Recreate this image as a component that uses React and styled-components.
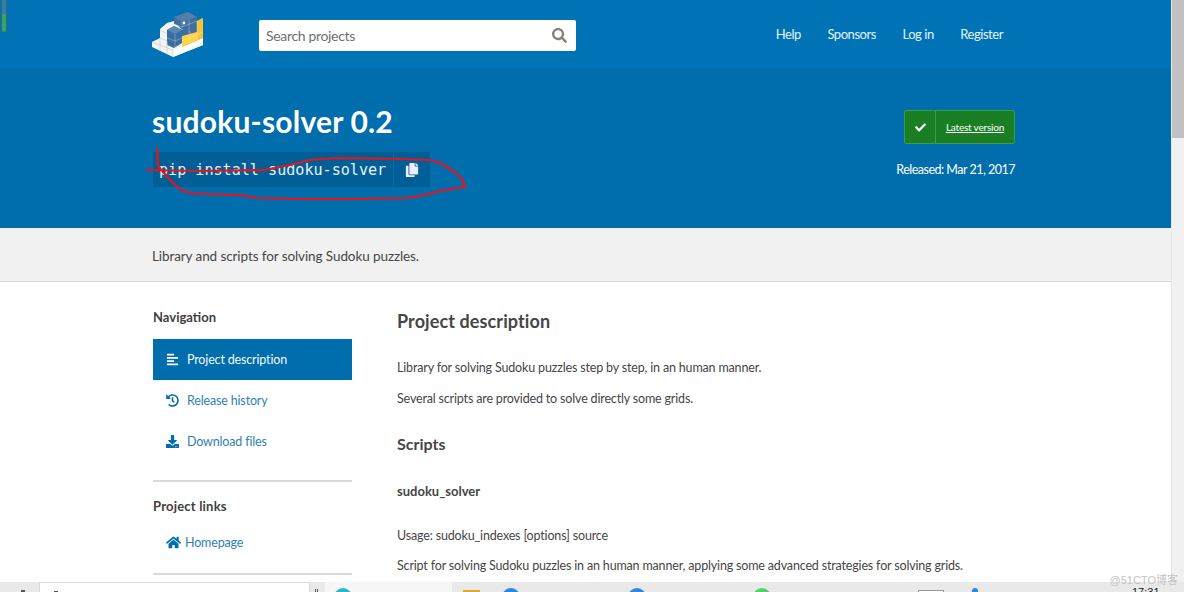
import React from "react";
import styled, { createGlobalStyle } from "styled-components";
import { FaAlignLeft, FaHistory, FaDownload, FaHome, FaCheck, FaSearch, FaCopy } from "react-icons/fa";

const Global = createGlobalStyle`
  html, body { margin: 0; padding: 0; height: 100%; overflow: hidden; background: #fff; }
  #root { height: 592px; }
  * { box-sizing: border-box; }
`;
const Shell = styled.div`
  position: relative; width: 1184px; height: 592px; overflow: hidden;
  display: flex; flex-direction: column;
  font-family: Lato, "Noto Sans", sans-serif; color: #464646;
`;
const Viewport = styled.div`display: flex; height: 582px; overflow: hidden;`;
const Page = styled.div`width: 1171px; flex: none;`;
const Scrollbar = styled.div`width: 13px; background: #f1f1f1; border-left: 1px solid #e6e6e6;`;
const Thumb = styled.div`height: 138px; background: #c1c1c1;`;
const Header = styled.header`
  height: 69px; background: #0073b7; border-bottom: 1px solid #006dad;
  padding: 12px 168px 0 152px; display: flex; align-items: flex-start;
`;
const Search = styled.div`
  width: 317px; height: 31px; margin: 8px 0 0 55px; background: #fff; border-radius: 2px;
  display: flex; align-items: center; justify-content: space-between;
  padding: 0 9px 0 7px; font-size: 14px; letter-spacing: -.33px; color: #707070;
  svg { color: #8a8078; font-size: 15px; }
`;
const Nav = styled.nav`
  margin: 7px 0 0 auto; height: 29px; display: flex; align-items: center; gap: 26.5px;
  font-size: 13px; letter-spacing: -.45px; color: #e6f2f8;
`;
const Hero = styled.section`
  height: 159px; background: #006dad; padding: 36px 156px 0 152px;
  display: flex; justify-content: space-between; color: #fff;
`;
const Title = styled.h1`
  margin: 0; font-size: 30px; line-height: 33px; font-weight: 700; letter-spacing: .2px;
`;
const Pip = styled.div`
  margin-top: 13px; width: 279px; height: 37px; display: flex; align-items: center;
  background: #005f96; border: 1px solid #0a6ca3;
  font-family: "DejaVu Sans Mono", monospace; font-size: 15.1px; color: #e8f2f8;
`;
const PipText = styled.span`flex: 1; padding-left: 6px; white-space: nowrap;`;
const PipCopy = styled.span`
  width: 37px; height: 100%; border-left: 1px solid #0a6ca3;
  display: flex; align-items: center; justify-content: center; font-size: 14px; color: #eef;
`;
const Side = styled.div`
  display: flex; flex-direction: column; align-items: flex-end; padding-top: 5px;
`;
const Latest = styled.div`
  width: 111px; height: 34px; display: flex; background: #1a7f24;
  border: 1px solid #3c9a4c; border-radius: 2px; font-size: 10px; letter-spacing: -.2px;
`;
const LatestIcon = styled.span`
  width: 31px; border-right: 1px solid #3c9a4c; display: flex; align-items: center; justify-content: center; font-size: 11px;
`;
const LatestText = styled.span`flex: 1; display: flex; align-items: center; justify-content: center; text-decoration: underline;`;
const Released = styled.div`margin-top: 18px; font-size: 12.5px; line-height: 16px; letter-spacing: -.5px;`;
const Band = styled.div`
  height: 54px; background: #f1f1f1; border-bottom: 1px solid #dcdcdc;
  padding: 2px 0 0 152px; display: flex; align-items: center; font-size: 13.5px; letter-spacing: -.09px; color: #464646;
`;
const Main = styled.main`display: flex; padding-left: 153px;`;
const Sidebar = styled.aside`width: 199px; flex: none; padding-top: 26px;`;
const SideHead = styled.h3`
  margin: ${p => p.$mt || 0}px 0 0; font-size: 13px; line-height: 18px; font-weight: 700;
  letter-spacing: ${p => p.$ls || 0}px; color: #404040;
`;
const NavItem = styled.div`
  height: ${p => p.$h}px; margin-top: ${p => p.$mt || 0}px; display: flex; align-items: center;
  padding-left: 13px; gap: ${p => p.$gap || 8}px; font-size: 12.5px; letter-spacing: -.16px;
  background: ${p => p.$active ? "#006dad" : "transparent"};
  color: ${p => p.$active ? "#f4f9fc" : "#2f7fb5"};
  svg { font-size: ${p => p.$icon || 13}px; color: ${p => p.$active ? "#fff" : "#006dad"}; }
`;
const Rule = styled.hr`margin: ${p => p.$m}; border: 0; border-top: 2px solid #d9d9d9; height: 0;`;
const Content = styled.div`margin-left: 45px; padding-top: 26px; white-space: nowrap;`;
const H2 = styled.h2`margin: 0; font-size: 18px; line-height: 26px; font-weight: 700; letter-spacing: .1px; color: #464646;`;
const H3 = styled.h3`margin: ${p => p.$mt}px 0 0; font-size: 16px; line-height: 24px; font-weight: 700; color: #464646;`;
const H4 = styled.h4`margin: ${p => p.$mt}px 0 0; font-size: 13px; line-height: 18px; font-weight: 700; color: #464646;`;
const P = styled.p`margin: ${p => p.$mt}px 0 0; font-size: 12.5px; line-height: 18px; letter-spacing: -.165px; color: #464646;`;
const Taskbar = styled.footer`
  height: 10px; background: #e9e9e9; display: flex; align-items: flex-start; overflow: hidden; position: relative;
  font-family: "Liberation Sans", sans-serif;
`;
const TaskGlyph = styled.span`
  flex: none; width: ${p => p.$w}px; margin-left: ${p => p.$ml}px; height: 3px; margin-top: ${p => p.$mt || 8}px; background: #555;
`;
const TaskSearch = styled.div`
  flex: none; margin-left: 14px; width: 271px; height: 10px; background: #fff; border: 1px solid #d8d8d8; border-bottom: 0;
  display: flex;
`;
const Divider = styled.span`
  flex: none; margin: 7px 0 0 5px; width: 3px; height: 3px; border-left: 1px solid #555; border-right: 1px solid #555;
`;
const LightZone = styled.div`flex: none; margin-left: 7px; width: 127px; height: 10px; background: #f6f6f6; display: flex;`;
const Round = styled.span`
  flex: none; width: ${p => p.$s || 18}px; height: ${p => p.$s || 18}px; border-radius: 50%;
  margin-left: ${p => p.$ml}px; margin-top: 6px; background: ${p => p.$c};
`;
const Folder = styled.span`flex: none; width: 17px; height: 12px; margin: 8px 0 0 ${p => p.$ml}px; background: #e0a92b;`;
const TrayBox = styled.span`flex: none; width: 26px; height: 6px; margin: 8px 0 0 ${p => p.$ml}px; background: #fff; border: 1px solid #999;`;
const Clock = styled.span`
  flex: none; margin-left: ${p => p.$ml}px; margin-top: 3px; font-size: 11px; line-height: 14px; color: #222;
`;
const Mark = styled.div`
  position: absolute; left: 1px; top: -4px; width: 6px; height: 37px; border: 1px solid #3d6377; border-radius: 3px;
  background: linear-gradient(#2f80a8 50%, #2fa866 50%);
`;
const Watermark = styled.div`
  position: absolute; right: 6px; top: 572px; font-size: 11px; line-height: 16px; color: #c3c3c3;
  font-family: "Liberation Sans", "Noto Sans CJK SC", sans-serif;
`;
const Overlay = styled.svg`position: absolute; left: 0; top: 0; pointer-events: none;`;

const Logo = () => (
  <svg width="52" height="46" viewBox="152 12 52 46" style={{ flex: "none" }}>
    <polygon points="152,42 160,38 160,29 167,23 174,21 182,30 182,47 203,38 203,45 173,57 152,47" fill="#f4f4f4" />
    <polygon points="174,49 182,47 203,38 203,45 173,57" fill="#ffffff" />
    <polygon points="182,36 197,30 197,21 203,18 203,38 182,47" fill="#ffd343" />
    <polygon points="197,21 203,18 203,38 197,40" fill="#f4c535" />
    <polygon points="174,17 188,12 197,17 197,32 182,36 182,27 174,24" fill="#3f6f9f" />
    <polygon points="174,17 188,12 197,17 182,22" fill="#527ea9" />
    <polygon points="167,30 174,26 182,30 182,43 174,48 167,45" fill="#3a6ea3" />
    <polygon points="167,30 174,26 182,30 175,34" fill="#5a86b0" />
    <g stroke="#ffffff66" strokeWidth=".7" fill="none">
      <path d="M175 34V48M167 38l8 3 7-3M182 22V30M189 20V33M174 24l8 3 15-6" />
      <path d="M190 31V44M182 41l21-9M197 21V40" />
    </g>
    <g stroke="#cfcfcf" strokeWidth=".7" fill="none">
      <path d="M160 38V51M167 41V54M160 30l7 4M160 38l7 3M152 42l21 8V57" />
    </g>
    <circle cx="184" cy="23" r="1.4" fill="#fff" />
    <circle cx="193" cy="45" r="1.4" fill="#fff" />
  </svg>
);

export default function App() {
  return (
    <Shell>
      <Global />
      <Viewport>
        <Page>
          <Header>
            <Logo />
            <Search>Search projects<FaSearch /></Search>
            <Nav><span>Help</span><span>Sponsors</span><span>Log in</span><span>Register</span></Nav>
          </Header>
          <Hero>
            <div>
              <Title>sudoku-solver 0.2</Title>
              <Pip><PipText>pip install sudoku-solver</PipText><PipCopy><FaCopy /></PipCopy></Pip>
            </div>
            <Side>
              <Latest><LatestIcon><FaCheck /></LatestIcon><LatestText>Latest version</LatestText></Latest>
              <Released>Released: Mar 21, 2017</Released>
            </Side>
          </Hero>
          <Band>Library and scripts for solving Sudoku puzzles.</Band>
          <Main>
            <Sidebar>
              <SideHead>Navigation</SideHead>
              <NavItem $active $h={41} $mt={13}><FaAlignLeft />Project description</NavItem>
              <NavItem $h={41}><FaHistory />Release history</NavItem>
              <NavItem $h={41}><FaDownload />Download files</NavItem>
              <Rule $m="18px 0 0" />
              <SideHead $mt={15} $ls={.2}>Project links</SideHead>
              <NavItem $h={41} $mt={7} $gap={4} $icon={15}><FaHome />Homepage</NavItem>
              <Rule $m="10px 0 0" />
            </Sidebar>
            <Content>
              <H2>Project description</H2>
              <P $mt={25}>Library for solving Sudoku puzzles step by step, in an human manner.</P>
              <P $mt={13}>Several scripts are provided to solve directly some grids.</P>
              <H3 $mt={24}>Scripts</H3>
              <H4 $mt={26}>sudoku_solver</H4>
              <P $mt={27}>Usage: sudoku_indexes [options] source</P>
              <P $mt={12}>Script for solving Sudoku puzzles in an human manner, applying some advanced strategies for solving grids.</P>
            </Content>
          </Main>
        </Page>
        <Scrollbar><Thumb /></Scrollbar>
      </Viewport>
      <Taskbar>
        <TaskGlyph $w={4} $ml={21} />
        <TaskSearch><TaskGlyph $w={4} $ml={14} /></TaskSearch>
        <Divider />
        <LightZone><Round $c="#2bb8c9" $ml={9} /></LightZone>
        <Folder $ml={11} />
        <Round $c="#2f86e0" $ml={22} />
        <Round $c="#2f86e0" $ml={108} />
        <Round $c="#4fd06a" $ml={107} />
        <TrayBox $ml={147} />
        <Round $c="#2f86e0" $ml={28} $s={6} />
        <Clock $ml={154}>17:31</Clock>
      </Taskbar>
      <Mark />
      <Watermark>@51CTO博客</Watermark>
      <Overlay width="1184" height="592" viewBox="0 0 1184 592" fill="none">
        <path d="M157 148L158 166L163 172L172 182L181 190L190 193L205 194L240 195L257 198L300 199L360 199L407 198L420 196L432 193L445 190L465 187L462 179L452 170L440 163L430 160L400 159L340 158L310 160L285 166L265 170L200 171L147 170" stroke="#e8141c" strokeWidth="2.2" strokeLinejoin="round" strokeLinecap="round" />
      </Overlay>
    </Shell>
  );
}
